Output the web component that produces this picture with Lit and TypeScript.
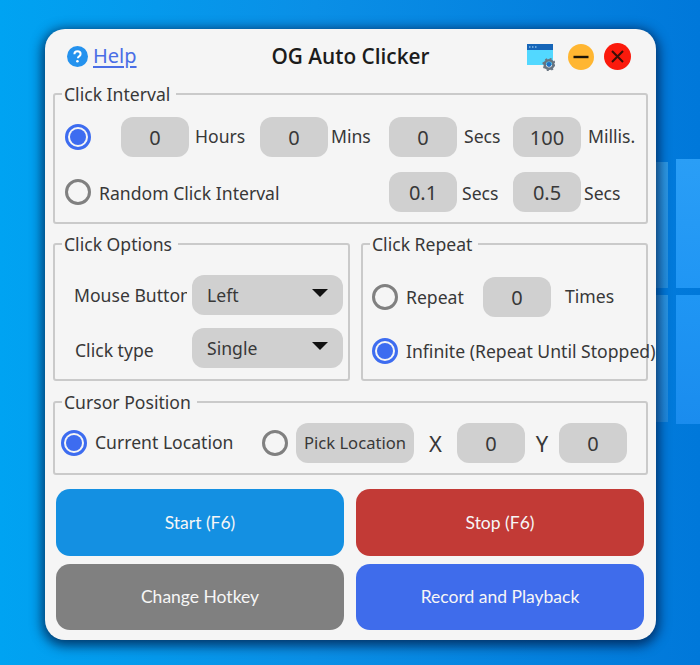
import { html, css, LitElement } from "lit";
import { customElement } from "lit/decorators.js";

@customElement("app-root")
export class AppRoot extends LitElement {
  static styles = css`
    :host {
      display: block;
      box-sizing: border-box;
      width: 700px;
      height: 665px;
      padding: 29px 44px 25px 45px;
      overflow: hidden;
      font-family: "Noto Sans", sans-serif;
      font-size: 17.6px;
      color: #383838;
      background:
        linear-gradient(#2d9ae6, #2490e0) 650px 162px / 18px 126px no-repeat,
        linear-gradient(#2a9ef6, #2096f4) 676px 159px / 24px 129px no-repeat,
        linear-gradient(#2a96e4, #1f8ade) 650px 295px / 18px 127px no-repeat,
        linear-gradient(#1f96f4, #1a8cee) 676px 295px / 24px 129px no-repeat,
        linear-gradient(90deg, #00a3f2 0%, #0a8fe6 45%, #0078da 100%);
    }

    .window {
      box-sizing: border-box;
      height: 611px;
      padding: 0 8px;
      border-radius: 20px;
      background: #f5f5f5;
      box-shadow: 0 3px 12px 3px rgba(0, 20, 60, 0.72);
    }

    .header {
      display: grid;
      grid-template-columns: 1fr auto 1fr;
      align-items: center;
      height: 55px;
    }

    .help {
      display: flex;
      align-items: center;
      gap: 5px;
      padding-left: 14px;
      font-size: 20px;
      color: #4a6ee6;
    }
    .help u {
      padding-bottom: 2px;
      text-underline-offset: 3px;
    }
    .help svg {
      display: block;
    }

    .title {
      padding-bottom: 2px;
      font-family: "Open Sans", sans-serif;
      font-size: 20.8px;
      font-weight: 600;
      color: #1c1c1c;
    }

    .controls {
      display: flex;
      align-items: center;
      justify-content: flex-end;
      padding-right: 17px;
    }
    .controls svg {
      display: block;
    }
    .controls .app {
      margin: 1px 13px 0 0;
    }
    .controls .min {
      margin-right: 10px;
    }

    fieldset {
      box-sizing: border-box;
      min-width: 0;
      margin: 0;
      padding: 13px 10px 10px;
      border: 2px solid #cacaca;
      border-radius: 3px;
    }
    legend {
      padding: 0 6px 0 2px;
      margin-left: -3px;
      line-height: 20px;
    }

    .up {
      padding-bottom: 3px;
    }
    .down {
      padding-top: 1px;
    }

    .interval {
      display: grid;
      grid-template-columns: 56px 68px 71px 68px 61px 68px 56px 68px 1fr;
      grid-auto-rows: 40px;
      row-gap: 15px;
      align-items: center;
    }
    .interval .random {
      grid-column: 1 / span 5;
    }
    .interval .l6 {
      padding-left: 6px;
    }
    .interval .l3 {
      padding-left: 3px;
    }
    .interval .l7 {
      padding-left: 7px;
    }
    .interval .l5 {
      padding-left: 5px;
    }

    .middle {
      display: grid;
      grid-template-columns: 297px 287px;
      column-gap: 11px;
      margin-top: 10px;
    }

    .options {
      padding-top: 21px;
      height: 147px;
    }
    .option-row {
      display: grid;
      grid-template-columns: 118px 151px;
      align-items: center;
      height: 40px;
      margin: 0 0 13px 9px;
    }
    .option-row:last-child {
      margin-bottom: 0;
    }
    .option-row .name {
      overflow: hidden;
      white-space: nowrap;
    }
    /* the reference cuts this label off at the select */
    .option-row .name.clip {
      width: 113px;
    }
    .option-row .name.low {
      padding: 4px 0 0 1px;
    }

    .select {
      display: flex;
      align-items: center;
      justify-content: space-between;
      box-sizing: border-box;
      height: 40px;
      padding: 0 15px;
      border-radius: 12px;
      background: #d0d0d0;
    }
    .select i {
      width: 0;
      height: 0;
      margin-bottom: 4px;
      border-left: 8px solid transparent;
      border-right: 8px solid transparent;
      border-top: 8px solid #111;
    }

    .repeat {
      padding-top: 23px;
      height: 147px;
    }
    .repeat-row {
      display: flex;
      align-items: center;
      height: 40px;
      margin-left: -1px;
      white-space: nowrap;
    }
    .repeat-row + .repeat-row {
      margin-top: 14px;
    }
    .repeat-row .short {
      width: 111px;
    }
    .repeat-row .field {
      margin-right: 14px;
    }
    .repeat-row .times {
      padding-bottom: 2px;
    }

    .cursor {
      display: flex;
      align-items: center;
      height: 83px;
      margin-top: 11px;
      padding-bottom: 9px;
      padding-top: 10px;
    }
    .cursor-row {
      display: flex;
      align-items: center;
      height: 40px;
      margin-left: -4px;
      white-space: nowrap;
    }
    .cursor-row .current {
      width: 201px;
    }
    .pick {
      display: flex;
      align-items: center;
      justify-content: center;
      box-sizing: border-box;
      width: 118px;
      height: 40px;
      margin-left: 8px;
      padding-bottom: 2px;
      border-radius: 12px;
      background: #d0d0d0;
      font-size: 16.6px;
    }
    .axis {
      width: 43px;
      text-align: center;
      font-size: 22px;
    }
    .axis.y {
      width: 34px;
    }

    .field {
      display: flex;
      align-items: center;
      justify-content: center;
      flex: none;
      width: 68px;
      height: 40px;
      border-radius: 12px;
      background: #d0d0d0;
      font-size: 20px;
    }

    .with-radio {
      display: flex;
      align-items: center;
      gap: 8px;
      white-space: nowrap;
    }

    .radio {
      display: block;
      flex: none;
      box-sizing: border-box;
      width: 26px;
      height: 26px;
      border: 3px solid #808080;
      border-radius: 50%;
    }
    .radio.on {
      border-color: #3d6cf0;
      padding: 2px;
    }
    .radio.on::after {
      content: "";
      display: block;
      width: 16px;
      height: 16px;
      border-radius: 50%;
      background: #3d6cf0;
    }

    .buttons {
      display: grid;
      grid-template-columns: 288px 288px;
      grid-template-rows: 67px 66px;
      gap: 8px 12px;
      margin: 14px 3px 0;
    }
    .buttons div {
      display: flex;
      align-items: center;
      justify-content: center;
      border-radius: 14px;
      color: #f6f6f6;
      font-family: "Lato", sans-serif;
      font-size: 17.5px;
    }
    .buttons .low {
      padding-bottom: 2px;
    }
    .start {
      background: #1490e2;
    }
    .stop {
      background: #c23a36;
    }
    .hotkey {
      background: #808080;
    }
    .record {
      background: #3f6ceb;
    }
  `;

  private radio(on = false) {
    return html`<span class="radio ${on ? "on" : ""}"></span>`;
  }

  private field(value: string) {
    return html`<div class="field">${value}</div>`;
  }

  override render() {
    return html`
      <div class="window">
        <div class="header">
          <div class="help">
            <svg width="21" height="21" viewBox="0 0 21 21">
              <circle cx="10.5" cy="10.5" r="10.5" fill="#2492ee" />
              <path
                d="M7.4 8.2c0-1.8 1.3-2.9 3.1-2.9s3.1 1 3.1 2.7c0 1.2-.7 1.8-1.5 2.4-.8.5-1.2.9-1.2 1.9"
                fill="none"
                stroke="#fff"
                stroke-width="2"
              />
              <circle cx="10.4" cy="15.3" r="1.3" fill="#fff" />
            </svg>
            <u>Help</u>
          </div>
          <div class="title">OG Auto Clicker</div>
          <div class="controls">
            <svg class="app" width="28" height="27" viewBox="0 0 28 27">
              <rect x="0" y="0" width="26" height="21" fill="#52d8ff" />
              <rect x="0" y="0" width="26" height="6" fill="#1565b8" />
              <path d="M2 3h1.500M5 3h1.500M8 3h1.500" stroke="#bfe8ff" stroke-width="1.200" />
              <circle cx="22" cy="20.500" r="4.300" fill="none" stroke="#687480" stroke-width="2.600" />
              <circle
                cx="22"
                cy="20.500"
                r="5.800"
                fill="none"
                stroke="#687480"
                stroke-width="1.600"
                stroke-dasharray="2 2.550"
              />
              <circle cx="22" cy="20.500" r="2.400" fill="#1f6fc4" />
            </svg>
            <svg class="min" width="26" height="26" viewBox="0 0 26 26">
              <circle cx="13" cy="13" r="13" fill="#ffb631" />
              <path d="M5.500 13h15" stroke="#1a1408" stroke-width="2.400" />
            </svg>
            <svg width="27" height="27" viewBox="0 0 27 27">
              <circle cx="13.500" cy="13.500" r="13.500" fill="#fb1a0c" />
              <path d="M8 8l11 11M19 8L8 19" stroke="#3a0f08" stroke-width="2" />
            </svg>
          </div>
        </div>

        <fieldset>
          <legend>Click Interval</legend>
          <div class="interval">
            ${this.radio(true)} ${this.field("0")}
            <span class="l6 up">Hours</span>
            ${this.field("0")}
            <span class="l3 up">Mins</span>
            ${this.field("0")}
            <span class="l7 up">Secs</span>
            ${this.field("100")}
            <span class="l7 up">Millis.</span>

            <div class="random with-radio">
              ${this.radio()} <span class="down">Random Click Interval</span>
            </div>
            ${this.field("0.1")}
            <span class="l5 down">Secs</span>
            ${this.field("0.5")}
            <span class="l3 down">Secs</span>
          </div>
        </fieldset>

        <div class="middle">
          <fieldset class="options">
            <legend>Click Options</legend>
            <div class="option-row">
              <span class="name clip">Mouse Button</span>
              <div class="select">Left<i></i></div>
            </div>
            <div class="option-row">
              <span class="name low">Click type</span>
              <div class="select">Single<i></i></div>
            </div>
          </fieldset>

          <fieldset class="repeat">
            <legend>Click Repeat</legend>
            <div class="repeat-row">
              <div class="with-radio short">${this.radio()} Repeat</div>
              ${this.field("0")}
              <span class="times">Times</span>
            </div>
            <div class="repeat-row">
              <div class="with-radio">${this.radio(true)} Infinite (Repeat Until Stopped)</div>
            </div>
          </fieldset>
        </div>

        <fieldset class="cursor">
          <legend>Cursor Position</legend>
          <div class="cursor-row">
            <div class="with-radio current">
              ${this.radio(true)} <span class="up">Current Location</span>
            </div>
            ${this.radio()}
            <div class="pick">Pick Location</div>
            <div class="axis">X</div>
            ${this.field("0")}
            <div class="axis y">Y</div>
            ${this.field("0")}
          </div>
        </fieldset>

        <div class="buttons">
          <div class="start">Start (F6)</div>
          <div class="stop">Stop (F6)</div>
          <div class="hotkey low">Change Hotkey</div>
          <div class="record low">Record and Playback</div>
        </div>
      </div>
    `;
  }
}
